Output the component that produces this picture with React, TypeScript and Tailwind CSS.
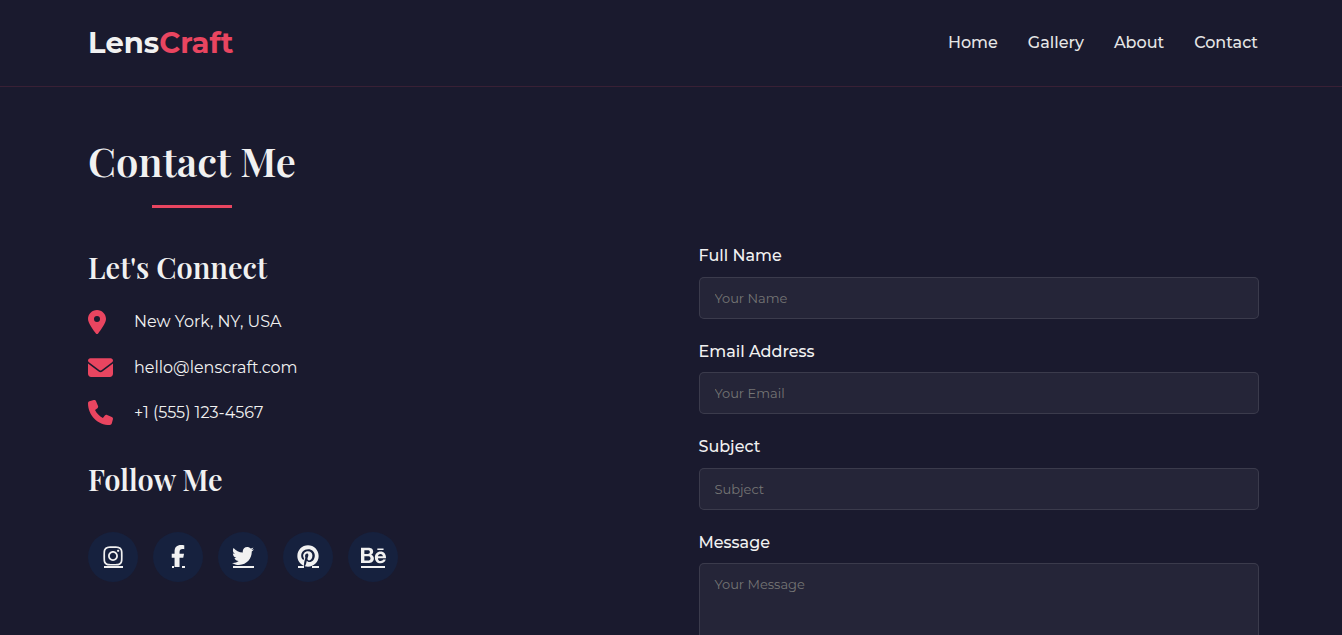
import type { ReactNode } from "react";
import { FaLocationDot, FaEnvelope, FaPhone, FaInstagram, FaFacebookF, FaTwitter, FaPinterest, FaBehance } from "react-icons/fa6";

const navLinks = ["Home", "Gallery", "About", "Contact"];

const contactItems = [
  { icon: <FaLocationDot className="h-6 w-[18px]" />, text: "New York, NY, USA" },
  { icon: <FaEnvelope className="size-[25px]" />, text: "hello@lenscraft.com" },
  { icon: <FaPhone className="size-[25px]" />, text: "+1 (555) 123-4567" },
];

// gap is the part of the underline skipped where the glyph dips into it
const socials = [
  { label: "Instagram", icon: <FaInstagram className="size-[22px]" />, line: "w-[19px]", gap: "" },
  { label: "Facebook", icon: <FaFacebookF className="size-[22px]" />, line: "w-[13px]", gap: "w-2" },
  { label: "Twitter", icon: <FaTwitter className="size-[22px]" />, line: "w-[21px]", gap: "" },
  { label: "Pinterest", icon: <FaPinterest className="size-[22px]" />, line: "w-[21px]", gap: "w-2" },
  { label: "Behance", icon: <FaBehance className="size-[25px]" />, line: "w-6", gap: "" },
];

const fieldClass =
  "block w-full rounded-[5px] border border-white/10 bg-white/5 px-[15px] text-[13px] text-[#f1f1f1] placeholder:text-[#757575] focus:border-[#e94560] focus:outline-none";

const headingFont = "font-['Playfair_Display','Liberation_Serif',serif] font-semibold";

function Field({ id, label, children }: { id: string; label: string; children: ReactNode }) {
  return (
    <div>
      <label htmlFor={id} className="mb-2 block font-medium">
        {label}
      </label>
      {children}
    </div>
  );
}

export default function App() {
  return (
    <div className="min-h-screen bg-[#1a1a2e] font-['Montserrat','Inter',sans-serif] text-base leading-[1.6] text-[#f1f1f1]">
      <header className="border-b border-[#e94560]/15">
        <div className="flex h-[86px] items-center justify-between pr-[84px] pl-[88px]">
          <a href="#home" className="text-[29px] font-bold">
            Lens<span className="text-[#e94560]">Craft</span>
          </a>
          <nav className="flex gap-[30px] font-medium text-[#e6e6e6]">
            {navLinks.map((name) => (
              <a key={name} href={`#${name.toLowerCase()}`} className="hover:text-[#e94560]">
                {name}
              </a>
            ))}
          </nav>
        </div>
      </header>

      <main className="pt-[42px] pr-[83px] pb-20 pl-[88px]">
        <div className="inline-flex flex-col items-center">
          <h1 className={`${headingFont} text-[40px] leading-[64px]`}>Contact Me</h1>
          <div className="mt-3 h-[3px] w-20 bg-[#e94560]" />
        </div>

        <div className="mt-[35px] grid grid-cols-2 gap-[50px]">
          <section>
            <h2 className={`${headingFont} text-[29px] leading-[48px]`}>Let's Connect</h2>
            <ul className="mt-[18px] space-y-5">
              {contactItems.map((item) => (
                <li key={item.text} className="flex items-center">
                  <span className="w-[46px] text-[#e94560]">{item.icon}</span>
                  <span>{item.text}</span>
                </li>
              ))}
            </ul>
            <h2 className={`${headingFont} mt-[29px] text-[29px] leading-[48px]`}>Follow Me</h2>
            <div className="mt-[29px] flex gap-[15px]">
              {socials.map((s) => (
                <a
                  key={s.label}
                  href={`#${s.label.toLowerCase()}`}
                  aria-label={s.label}
                  className="relative flex size-[50px] items-center justify-center rounded-full bg-[#16213e] pb-0.5"
                >
                  {s.icon}
                  <span className={`absolute bottom-[14px] flex h-0.5 ${s.line}`}>
                    <span className="flex-1 bg-[#f1f1f1]" />
                    <span className={s.gap} />
                    <span className="flex-1 bg-[#f1f1f1]" />
                  </span>
                </a>
              ))}
            </div>
          </section>

          <form className="space-y-5">
            <Field id="name" label="Full Name">
              <input id="name" type="text" placeholder="Your Name" className={`${fieldClass} h-[42px]`} />
            </Field>
            <Field id="email" label="Email Address">
              <input id="email" type="email" placeholder="Your Email" className={`${fieldClass} h-[42px]`} />
            </Field>
            <Field id="subject" label="Subject">
              <input id="subject" type="text" placeholder="Subject" className={`${fieldClass} h-[42px]`} />
            </Field>
            <Field id="message" label="Message">
              <textarea id="message" placeholder="Your Message" className={`${fieldClass} h-[150px] py-[10px]`} />
            </Field>
          </form>
        </div>
      </main>
    </div>
  );
}
